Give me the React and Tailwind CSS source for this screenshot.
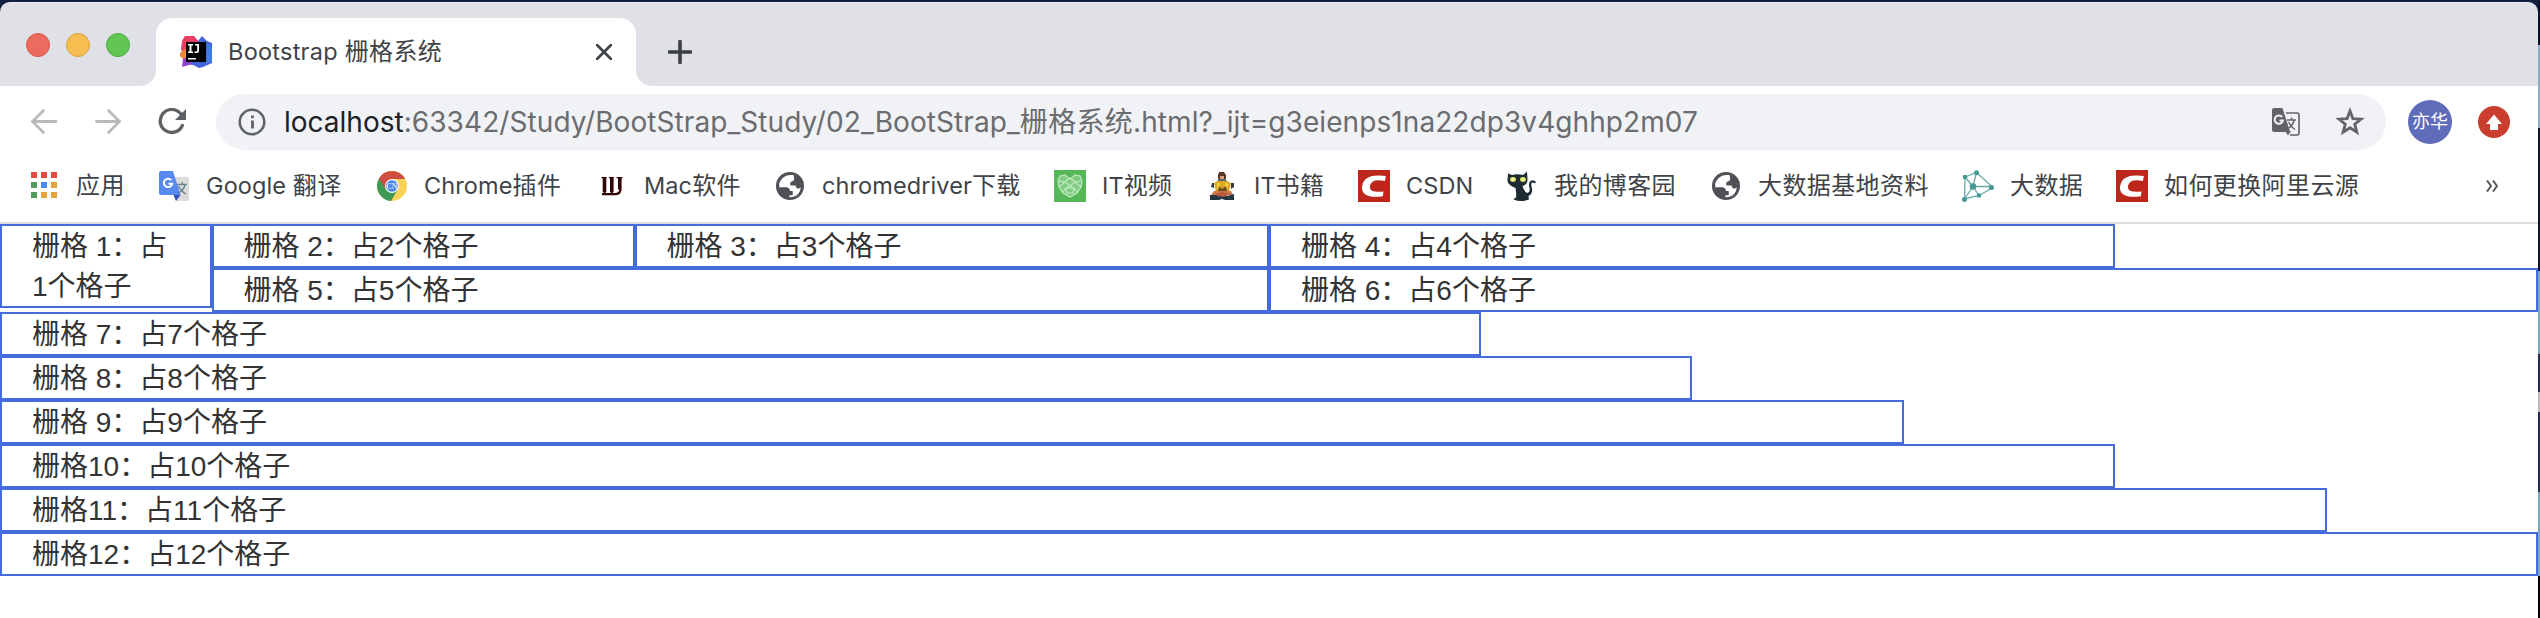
const UI = "font-['Inter','Noto_Sans_CJK_SC',sans-serif]";

/* Gives Latin and Chinese runs their own size and tracking. */
function Mixed({ text, latin, cjk }) {
  return text
    .split(/([\u3000-\u9fff]+)/)
    .filter(Boolean)
    .map((part, i) => (
      <span key={i} className={/[\u3000-\u9fff]/.test(part) ? cjk : latin}>{part}</span>
    ));
}

function IdeaIcon() {
  return (
    <svg viewBox="0 0 32 32" className="size-8 shrink-0">
      <path d="M2 5 5 0h9l5 6-6 12H3L1 13Z" fill="#ea3e63" />
      <path d="M0 17l5-4 6 8-7 3-4-4Z" fill="#ee8a35" />
      <path d="M3 23l8-3 6 8-8 1-7 2Z" fill="#8a45cf" />
      <path d="M18 5l4-5 5 5 5 2v20l-9 4-4 1-8-4 5-8Z" fill="#4466dd" />
      <path d="M27 8l5 3v14l-6 4Z" fill="#3c7be8" />
      <path d="M6 6h20v20H6z" fill="#000" />
      <path d="M8 8h5v1.500h-1.500v6H13V17H8v-1.500h1.500v-6H8zM15 8h4v6.500Q19 17 16.500 17H14.500v-1.600h1.700q1-.1 1-1V9.600H15zM8 22h8v1.500H8z" fill="#fff" />
    </svg>
  );
}

function AppsIcon() {
  const c = ['#e44b40', '#e44b40', '#e44b40', '#539a5d', '#4a8af0', '#e5a43a', '#539a5d', '#e5a43a', '#e5a43a'];
  return (
    <svg viewBox="0 0 32 32" className="size-8">
      {c.map((f, i) => (
        <rect key={i} x={3 + (i % 3) * 10} y={2 + Math.floor(i / 3) * 10} width="6" height="6" fill={f} />
      ))}
    </svg>
  );
}

function TranslateIcon() {
  return (
    <svg viewBox="0 0 32 32" className="size-8">
      <path d="M14 7h15q2 0 2 2v20q0 2-2 2H18Z" fill="#dcdcdc" />
      <path d="M15.500 25h7L18 31Z" fill="#3551bd" />
      <path d="M3 1h12l7.500 24H3q-2 0-2-2V3q0-2 2-2Z" fill="#568af0" />
      <path d="M13.300 10.200a4.200 4.200 0 1 0 .9 3.500H10.500" fill="none" stroke="#fff" strokeWidth="2" />
      <path d="M19 14.500h10M24 12v2.500M27 15q-1.500 5.500-7 8.500M20.500 16q2 5 7.500 8" fill="none" stroke="#6b8592" strokeWidth="1.400" />
    </svg>
  );
}

function ChromeIcon() {
  return (
    <svg viewBox="0 0 32 32" className="size-8">
      <circle cx="16" cy="16" r="15" fill="#fbd258" />
      <path d="M16 16 3 8.500A15 15 0 0 1 29 9H16Z" fill="#cf4c40" />
      <path d="M16 16 3 8.500A15 15 0 0 0 15 31l7-12Z" fill="#3f9a57" />
      <path d="M3 8.500 9.500 19 16 9h13A15 15 0 0 0 3 8.500Z" fill="#cf4c40" />
      <circle cx="16" cy="16" r="7" fill="#f2f5f9" />
      <circle cx="16" cy="16" r="5.800" fill="#4b86e8" />
      <text x="16" y="19" textAnchor="middle" fontSize="8" fontFamily="Liberation Serif, serif" fill="#fff">CN</text>
    </svg>
  );
}

function WIcon() {
  return (
    <svg viewBox="0 0 32 32" className="size-8" fill="none" stroke="#330606">
      <path d="M8.500 7v15M15.800 7v15M23.800 7v12.500" strokeWidth="3.600" />
      <path d="M5.500 7.600h5M13 7.600h4.600M20.500 7.600h6" strokeWidth="1.200" />
      <path d="M6 24.200h14q4-.4 4.600-5.200M8.500 20v4M15.800 20v4" strokeWidth="2.200" />
    </svg>
  );
}

function GlobeIcon() {
  return (
    <svg viewBox="0 0 32 32" className="size-8">
      <circle cx="16" cy="16" r="14" fill="#505157" />
      <path d="M17.500 5Q9 4.500 5.500 12.500 4.800 15 5.500 17.500H13q3 .4 2.800 3.800l2.700.2V25h-3v2.200q7.500.3 10.500-6.200l.8-3.500q-2 1.800-4.300.5l-1-2.500h-5q-1-2.800 1-4 2.800-.3 2.700-3.500-.8-2-.5-3Z" fill="#fff" />
      <path d="M6 17.500h6.500q3 .2 3 3.600h3v4.200h-3.500v2.300Q8 27 6 17.500Z" fill="#505157" />
    </svg>
  );
}

function LionIcon() {
  return (
    <svg viewBox="0 0 32 32" className="size-8">
      <path d="M0 0h32v32H0z" fill="#56b756" />
      <path d="M6 6l5-1 3 3h4l3-3 5 1 2 5-1 6-4 6-7 4-7-4-4-6-1-6Z" fill="#7fcb80" />
      <g fill="none" stroke="#bfeac0" strokeWidth="1.200">
        <path d="M6 6l5-1 3 3h4l3-3 5 1 2 5-1 6-4 6-7 4-7-4-4-6-1-6ZM5 11l6 1 5-4 5 4 6-1M5 17l6-5 5 4 5-4 6 5M9 22l3-4h8l3 4M12 18l4-2 4 2-1 5h-6Z" />
      </g>
    </svg>
  );
}

function MonkIcon() {
  return (
    <svg viewBox="0 0 32 32" className="size-8">
      <path d="M13 2h5l2 3v4h-8V5Z" fill="#5a3427" />
      <path d="M14 6h4v5h-4Z" fill="#d9a07a" />
      <path d="M11 11l2-2h6l3 3v3H10Z" fill="#57636b" />
      <path d="M8 13l4-2h8l5 2-2 9H10Z" fill="#dba729" />
      <path d="M6 13l2 0v5l-3-1ZM25 13l3 0v4l-3 2Z" fill="#333d44" />
      <path d="M11 13h3v6h-3ZM19 13h3v5h-3Z" fill="#f4ce37" />
      <path d="M13 16l3 3 4-3 1 5H12Z" fill="#6c4b20" />
      <path d="M8 21h17l2 4H5Z" fill="#cc7448" />
      <path d="M4 25h6l5-2 6 3 7-2v6h-9l-3-1-3 1H4Z" fill="#243641" />
      <path d="M10 24l6-2 8 2-6 3-7-1Z" fill="#b9583e" />
    </svg>
  );
}

function CsdnIcon() {
  return (
    <svg viewBox="0 0 32 32" className="size-8">
      <path d="M0 0h32v32H0z" fill="#bd261b" />
      <path d="M27.800 6l-.8 5q-8.500-1.800-12 .5-3.500 2.500-3 6.500 1 5 13.500 3.500l-.6 4.700Q5 29 4 18.500 4 5.500 20 5.400q5-.1 7.800.6Z" fill="#fff" />
    </svg>
  );
}

function CatIcon() {
  return (
    <svg viewBox="0 0 32 32" className="size-8">
      <path d="M2 3.500 6 5q5-1.500 11 0l4-3.500.5 8q0 5-5 6.500.8 3 3 6l2 1q3-1.500 2-5-1.500-5 1-7 3-2 5.500 1l-1 1.500q-3-2-3.600 0-.4 1.500.6 5 1 5-3.500 7.500l.5 3.500q-8 3-15.500 0 1-1.500 2.500-2 .5-5-.5-9.500Q2 15 1.500 11Z" fill="#1f2b33" />
      <ellipse cx="7" cy="9.500" rx="3" ry="2.400" fill="#dbe35a" />
      <ellipse cx="17" cy="9.500" rx="3" ry="2.400" fill="#dbe35a" />
      <path d="M7 8v3M17 8v3" stroke="#f9fbd8" strokeWidth="1.500" />
    </svg>
  );
}

function NetIcon() {
  return (
    <svg viewBox="0 0 32 32" className="size-8">
      <path d="M3 7 14.500 2.500 31 17.500 17 25.500 2.500 29ZM3 7l8 9.500L14.500 2.500M11 16.500h20M11 16.500 17 25.500M11 16.500 2.500 29" fill="none" stroke="#69aaa6" strokeWidth="1.300" />
      <g fill="#459993">
        <circle cx="3" cy="7" r="2.300" />
        <circle cx="14.500" cy="2.700" r="2.500" />
        <circle cx="11" cy="16.500" r="3.300" />
        <circle cx="29.500" cy="17.500" r="2.500" />
        <circle cx="17" cy="25.500" r="2.300" />
        <circle cx="2.500" cy="29.500" r="2.500" />
      </g>
    </svg>
  );
}

const bookmarks = [
  { text: '应用', Icon: AppsIcon, w: 'w-[130px]' },
  { text: 'Google 翻译', Icon: TranslateIcon, w: 'w-[218px]' },
  { text: 'Chrome插件', Icon: ChromeIcon, w: 'w-[220px]' },
  { text: 'Mac软件', Icon: WIcon, w: 'w-[178px]' },
  { text: 'chromedriver下载', Icon: GlobeIcon, w: 'w-[280px]' },
  { text: 'IT视频', Icon: LionIcon, w: 'w-[152px]' },
  { text: 'IT书籍', Icon: MonkIcon, w: 'w-[152px]' },
  { text: 'CSDN', Icon: CsdnIcon, w: 'w-[148px]' },
  { text: '我的博客园', Icon: CatIcon, w: 'w-[204px]' },
  { text: '大数据基地资料', Icon: GlobeIcon, w: 'w-[252px]' },
  { text: '大数据', Icon: NetIcon, w: 'w-[154px]' },
  { text: '如何更换阿里云源', Icon: CsdnIcon, w: 'w-[260px]' },
];

function TabStrip() {
  return (
    <div className="flex h-[84px] bg-[#dfe1e6] rounded-t-[10px] border-t border-[#eeeff2]">
      <div className="flex w-[140px] shrink-0 gap-4 pl-[26px] pt-[30px]">
        <span className="size-6 rounded-full border border-[#d75348] bg-[#ed6a5f]" />
        <span className="size-6 rounded-full border border-[#dba13c] bg-[#f6be50]" />
        <span className="size-6 rounded-full border border-[#4daa3f] bg-[#62c655]" />
      </div>
      <svg viewBox="0 0 16 16" className="size-4 shrink-0 self-end">
        <path d="M0 16A16 16 0 0 0 16 0V16Z" fill="#fff" />
      </svg>
      <div className="mt-[15px] flex h-[68px] w-[480px] shrink-0 items-center rounded-t-2xl bg-white pl-6">
        <IdeaIcon />
        <span className={`${UI} ml-4 w-[368px] whitespace-nowrap text-[24px] leading-8 text-[#3f4347]`}>
          <Mixed text="Bootstrap 栅格系统" latin="text-[23.5px] tracking-[0.25px]" cjk="tracking-[0.4px]" />
        </span>
        <svg viewBox="0 0 16 16" className="size-4 shrink-0" fill="none" stroke="#3f4347" strokeWidth="2.800">
          <path d="M1 1 15 15M15 1 1 15" strokeLinecap="round" />
        </svg>
      </div>
      <svg viewBox="0 0 16 16" className="size-4 shrink-0 self-end">
        <path d="M16 16A16 16 0 0 1 0 0V16Z" fill="#fff" />
      </svg>
      <svg viewBox="0 0 24 24" className="ml-4 mt-[37px] size-6 shrink-0" fill="none" stroke="#3c3f43" strokeWidth="3.600">
        <path d="M12 1.500v21M1.500 12h21" strokeLinecap="round" />
      </svg>
    </div>
  );
}

function Toolbar() {
  return (
    <div className="flex h-[72px] items-center bg-white pl-[30px]">
      <svg viewBox="0 0 28 28" className="size-7" fill="none" stroke="#b9babc" strokeWidth="2.800" strokeLinecap="round">
        <path d="M26 13.500H3M13.500 2.500 2.500 13.500l11 11" />
      </svg>
      <svg viewBox="0 0 28 28" className="ml-9 size-7" fill="none" stroke="#b9babc" strokeWidth="2.800" strokeLinecap="round">
        <path d="M2.500 13.500h23M14.500 2.500l11 11-11 11" />
      </svg>
      <svg viewBox="0 0 28 28" className="ml-9 size-7">
        <path d="M22.500 5.500A11.500 11.500 0 1 0 24.300 17.500" fill="none" stroke="#5d6064" strokeWidth="3.300" strokeLinecap="round" />
        <path d="M28 1v11H17Z" fill="#5d6064" />
      </svg>
      <div className="ml-[30px] flex h-14 w-[2170px] shrink-0 items-center rounded-full bg-[#f1f2f5] pl-[22px]">
        <svg viewBox="0 0 28 28" className="size-7 shrink-0" fill="none" stroke="#5f6266">
          <circle cx="14" cy="14" r="12.300" strokeWidth="2.500" />
          <path d="M14.500 12.500v8M14.500 7.500v2.800" strokeWidth="2.800" />
        </svg>
        <span className={`${UI} ml-[18px] w-[1988px] whitespace-nowrap text-[28px] leading-10 text-[#6a6c6f]`}>
          <span className="text-[#202124]">localhost</span>
          <Mixed
            text=":63342/Study/BootStrap_Study/02_BootStrap_栅格系统.html?_ijt=g3eienps1na22dp3v4ghhp2m07"
            latin="tracking-[0.08px]"
            cjk="tracking-[0.3px]"
          />
        </span>
        <svg viewBox="0 0 28 28" className="size-7 shrink-0">
          <path d="M14 5h11q2 0 2 2v18q0 2-2 2h-7" fill="none" stroke="#616366" strokeWidth="1.600" />
          <path d="M2 0h8.500l7.500 23.500L14 24H2q-2 0-2-2V2Q0 0 2 0Z" fill="#616366" />
          <path d="M13 23h6l-3 4.500Z" fill="#616366" />
          <path d="M10.200 9a4.200 4.200 0 1 0 .8 3.500H7.500" fill="none" stroke="#f1f2f5" strokeWidth="2" />
          <path d="M15 12h9M19.500 9.500V12M22 12q-1 5-5 8M16.500 14q2 4.500 6.500 7.500" fill="none" stroke="#616366" strokeWidth="1.500" />
        </svg>
        <svg viewBox="0 0 30 30" className="ml-[35px] size-[30px] shrink-0" fill="none" stroke="#616366" strokeWidth="2.800">
          <path d="m15 4 2.900 7.600 8.100.5-6.300 5.100 2.100 7.900L15 20.700l-6.800 4.400 2.100-7.900L4 12.100l8.100-.5Z" />
        </svg>
      </div>
      <div className={`${UI} ml-[22px] flex size-11 items-center justify-center rounded-full bg-[#5f6cb9] text-[18px] leading-none text-white`}>亦华</div>
      <svg viewBox="0 0 32 32" className="ml-[26px] size-8">
        <circle cx="16" cy="16" r="16" fill="#c93e2e" />
        <path d="M16 8.500 24 18h-4v6h-8v-6H8Z" fill="#fff" />
      </svg>
    </div>
  );
}

function BookmarkBar() {
  return (
    <div className="flex h-[66px] border-b-2 border-[#dbdce0] bg-white pl-7 pt-3">
      {bookmarks.map(({ text, Icon, w }) => (
        <div key={text} className={`${w} flex h-8 shrink-0 items-center gap-4`}>
          <Icon />
          <span className={`${UI} whitespace-nowrap text-[24px] leading-8 text-[#3f4347]`}>
            <Mixed text={text} latin="text-[23.5px] tracking-[0.1px]" cjk="tracking-[0.4px]" />
          </span>
        </div>
      ))}
      <svg viewBox="0 0 12 12" className="ml-[110px] mt-[10px] size-3" fill="none" stroke="#55585c" strokeWidth="2">
        <path d="m1 .5 4 5.500-4 5.500M7 .5 11 6l-4 5.500" />
      </svg>
    </div>
  );
}

const cells = [
  ['栅格 1：占1个格子', 'col-span-1 row-span-2 h-[84px]'],
  ['栅格 2：占2个格子', 'h-11 col-span-2'],
  ['栅格 3：占3个格子', 'h-11 col-span-3'],
  ['栅格 4：占4个格子', 'h-11 col-span-4'],
  ['栅格 5：占5个格子', 'h-11 col-start-2 col-span-5'],
  ['栅格 6：占6个格子', 'h-11 col-span-6'],
  ['栅格 7：占7个格子', 'h-11 col-start-1 col-span-7'],
  ['栅格 8：占8个格子', 'h-11 col-start-1 col-span-8'],
  ['栅格 9：占9个格子', 'h-11 col-start-1 col-span-9'],
  ['栅格10：占10个格子', 'h-11 col-start-1 col-span-10'],
  ['栅格11：占11个格子', 'h-11 col-start-1 col-span-11'],
  ['栅格12：占12个格子', 'h-11 col-start-1 col-span-12'],
];

export default function App() {
  return (
    <div className="flex h-[618px] w-[2540px] overflow-hidden bg-[#13203f]">
      <div className="flex w-[2538px] flex-col pt-[2px]">
        <TabStrip />
        <Toolbar />
        <BookmarkBar />
        <div className="flex-1 bg-white">
          <div className="grid auto-rows-[44px] grid-cols-12 items-start font-['Liberation_Sans','Noto_Sans_CJK_SC',sans-serif] text-[28px] leading-10 text-[#333]">
            {cells.map(([text, span]) => (
              <div key={text} className={`${span} border-2 border-[#466cdc] px-[30px] pt-px`}>{text}</div>
            ))}
          </div>
        </div>
      </div>
      <div className="flex w-[2px] flex-col">
        <div className="h-[45px] bg-[#08152c]" />
        <div className="h-[83px] bg-[#7fb2cf]" />
        <div className="h-[143px] bg-[#0a1730]" />
        <div className="h-[83px] bg-[#6fa9c6]" />
        <div className="h-[38px] bg-[#1c2f5a]" />
        <div className="h-[20px] bg-[#b9babc]" />
        <div className="h-[80px] bg-[#1c2f5a]" />
        <div className="h-[84px] bg-[#6fa9c6]" />
        <div className="flex-1 bg-black" />
      </div>
    </div>
  );
}
